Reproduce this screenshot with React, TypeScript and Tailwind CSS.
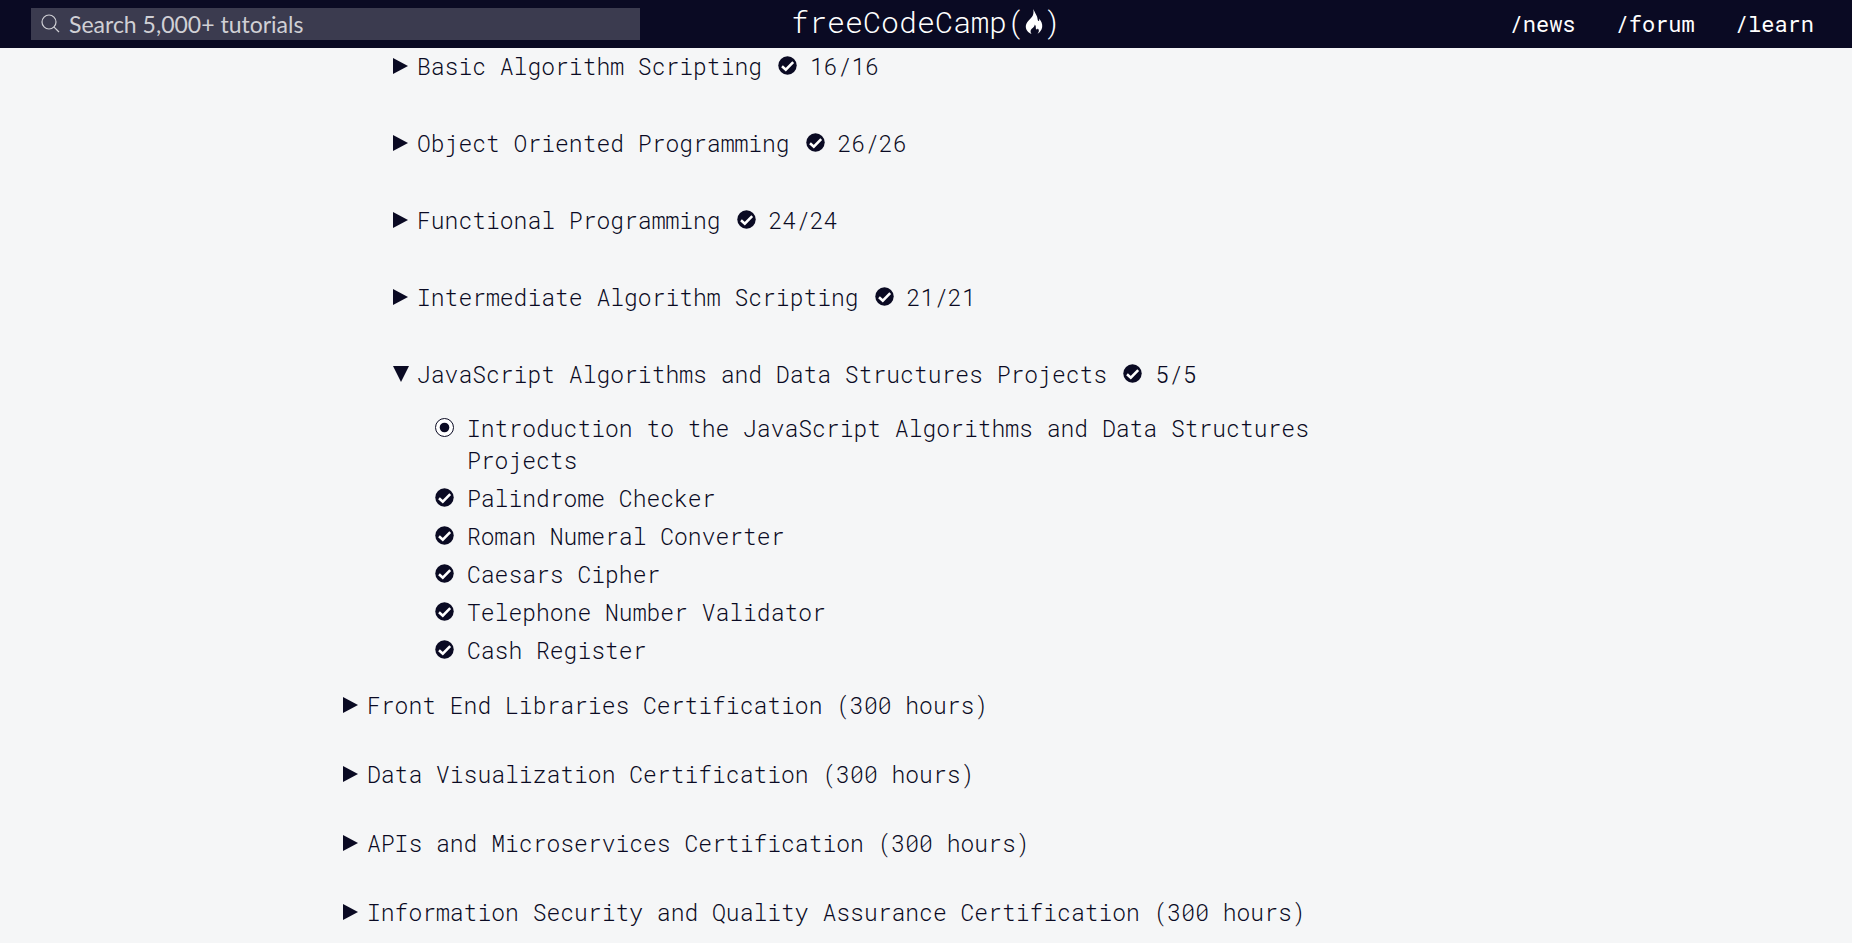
import { useState } from "react";

const blocks = [
  { title: "Basic Algorithm Scripting", count: "16/16" },
  { title: "Object Oriented Programming", count: "26/26" },
  { title: "Functional Programming", count: "24/24" },
  { title: "Intermediate Algorithm Scripting", count: "21/21" },
  { title: "JavaScript Algorithms and Data Structures Projects", count: "5/5" },
];

const challenges = [
  { title: "Introduction to the JavaScript Algorithms and Data Structures Projects", done: false },
  { title: "Palindrome Checker", done: true },
  { title: "Roman Numeral Converter", done: true },
  { title: "Caesars Cipher", done: true },
  { title: "Telephone Number Validator", done: true },
  { title: "Cash Register", done: true },
];

const certifications = [
  "Front End Libraries Certification (300 hours)",
  "Data Visualization Certification (300 hours)",
  "APIs and Microservices Certification (300 hours)",
  "Information Security and Quality Assurance Certification (300 hours)",
];

function Caret({ open = false }: { open?: boolean }) {
  return (
    <svg viewBox="0 0 16 16" className="size-4 shrink-0" fill="#0a0a23" aria-hidden="true">
      {open ? <path d="M0 0H16L8 16Z" /> : <path d="M0 0L15 8L0 16Z" />}
    </svg>
  );
}

function Passed() {
  return (
    <svg viewBox="0 0 20 20" className="size-5 shrink-0" aria-hidden="true">
      <circle cx="9.5" cy="9.5" r="9.2" fill="#0a0a23" />
      <path d="M4 10.2L7.8 13.6L15.2 6.2" fill="none" stroke="#fff" strokeWidth="2.6" />
    </svg>
  );
}

function NotPassed() {
  return (
    <svg viewBox="0 0 20 20" className="size-5 shrink-0" aria-hidden="true">
      <circle cx="9.5" cy="9.5" r="9" fill="#fff" stroke="#0a0a23" strokeWidth="1" />
      <circle cx="9.5" cy="9.5" r="4.8" fill="#0a0a23" />
    </svg>
  );
}

function Flame() {
  return (
    <svg viewBox="0 0 18 26" className="h-[26px] w-[18px]" fill="#fff" aria-hidden="true">
      <path d="M8.2 0C9.6 3 11 5 12 7.5C12.8 9.6 12.4 11.4 13.4 12C14.5 12.3 14.3 10.6 14 9.6C16.3 12 17.6 15 17.2 18C16.8 21 14.8 23.6 12.4 24.8C14.6 22.4 14 20.4 12.8 19.4C12.4 20.6 11.4 20.8 11 20C10.5 18.7 11.4 17.3 9.8 15.6C9.6 18.6 6 19.6 5.6 22C5.4 23.2 6 24.3 6.8 25C3 23.8 .8 21 .8 17.6C.8 12.6 5.6 10.6 7.8 6.4C8.8 4 8.6 2 8.2 0Z" />
    </svg>
  );
}

export default function App() {
  const [open, setOpen] = useState(true);
  const [query, setQuery] = useState("");
  return (
    <div className="h-screen overflow-hidden bg-white pr-[18px] font-['Roboto_Mono','Liberation_Mono',monospace] text-[23px] leading-8 font-[350] text-[#0a0a23]">
      <div className="h-full overflow-hidden bg-[#f5f6f7]">
        <header className="grid h-12 grid-cols-[1fr_auto_1fr] items-center bg-[#0a0a23] text-white">
          <label className="ml-[31px] flex h-8 w-[77%] items-center gap-2 bg-[#3b3b4f] pl-2.5">
            <svg viewBox="0 0 20 20" className="size-5 shrink-0" fill="none" stroke="#d0d0d5" strokeWidth="1.2" aria-hidden="true">
              <circle cx="8" cy="8" r="7" />
              <path d="M12.8 12.8L18 18" />
            </svg>
            <input
              type="text"
              aria-label="Search"
              placeholder="Search 5,000+ tutorials"
              value={query}
              onChange={(e) => setQuery(e.target.value)}
              className="w-full bg-transparent font-[Lato,sans-serif] text-[23px] leading-8 font-normal outline-none placeholder:text-[#d0d0d5]"
            />
          </label>
          <a href="#home" className="flex items-center pb-1 text-[30px] leading-none">
            <span>freeCodeCamp(</span>
            <Flame />
            <span>)</span>
          </a>
          <nav className="flex justify-end gap-10 pr-[38px] text-[22px] font-[450]">
            <a href="#news">/news</a>
            <a href="#forum">/forum</a>
            <a href="#learn">/learn</a>
          </nav>
        </header>

        <main className="mx-auto max-w-[1166px] pt-0.5">
          <ul className="pl-[50px]">
            {blocks.map((block, i) => {
              const last = i === blocks.length - 1;
              return (
                <li key={block.title} className={last ? "" : "mb-[45px]"}>
                  <button
                    type="button"
                    aria-expanded={last ? open : false}
                    onClick={last ? () => setOpen(!open) : undefined}
                    className="flex items-center text-left"
                  >
                    <Caret open={last && open} />
                    <span className="ml-2">{block.title}</span>
                    <span className="ml-4">
                      <Passed />
                    </span>
                    <span className="ml-3">{block.count}</span>
                  </button>
                </li>
              );
            })}
          </ul>
          {open && (
            <ul className="mt-[22px] space-y-1.5 pr-36 pl-[92px]">
              {challenges.map((c) => (
                <li key={c.title}>
                  <a href="#challenge" className="flex items-start gap-3">
                    <span className="flex h-8 items-center">{c.done ? <Passed /> : <NotPassed />}</span>
                    <span>{c.title}</span>
                  </a>
                </li>
              ))}
            </ul>
          )}
          <ul className="mt-[23px] space-y-[37px]">
            {certifications.map((name) => (
              <li key={name}>
                <button type="button" aria-expanded="false" className="flex items-center gap-2 text-left">
                  <Caret />
                  <span>{name}</span>
                </button>
              </li>
            ))}
          </ul>
        </main>
      </div>
    </div>
  );
}
